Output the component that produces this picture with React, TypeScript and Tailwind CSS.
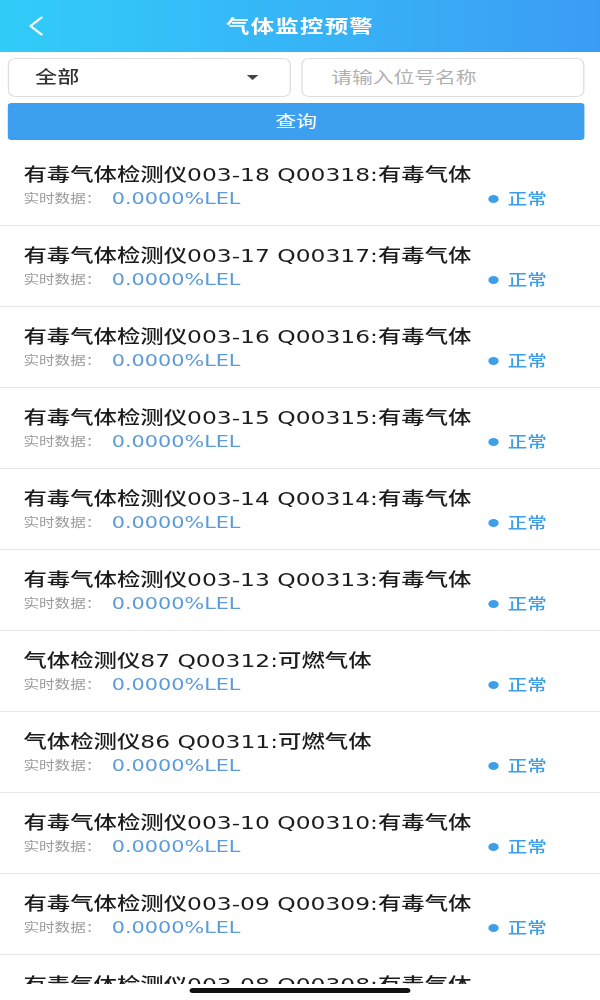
import React from "react"

type Device = {
  name: string
  value: string
  status: string
}

const devices: Device[] = [
  { name: "有毒气体检测仪003-18 Q00318:有毒气体", value: "0.0000%LEL", status: "正常" },
  { name: "有毒气体检测仪003-17 Q00317:有毒气体", value: "0.0000%LEL", status: "正常" },
  { name: "有毒气体检测仪003-16 Q00316:有毒气体", value: "0.0000%LEL", status: "正常" },
  { name: "有毒气体检测仪003-15 Q00315:有毒气体", value: "0.0000%LEL", status: "正常" },
  { name: "有毒气体检测仪003-14 Q00314:有毒气体", value: "0.0000%LEL", status: "正常" },
  { name: "有毒气体检测仪003-13 Q00313:有毒气体", value: "0.0000%LEL", status: "正常" },
  { name: "气体检测仪87 Q00312:可燃气体", value: "0.0000%LEL", status: "正常" },
  { name: "气体检测仪86 Q00311:可燃气体", value: "0.0000%LEL", status: "正常" },
  { name: "有毒气体检测仪003-10 Q00310:有毒气体", value: "0.0000%LEL", status: "正常" },
  { name: "有毒气体检测仪003-09 Q00309:有毒气体", value: "0.0000%LEL", status: "正常" },
  { name: "有毒气体检测仪003-08 Q00308:有毒气体", value: "0.0000%LEL", status: "正常" },
]

export default function App() {
  return (
    // the screenshot is stretched sideways, so the phone layout is drawn at 462px and widened
    <div className="w-[600px] h-[1000px] overflow-hidden bg-white font-['DejaVu_Sans','Noto_Sans_CJK_SC',sans-serif]">
      <div className="w-[462px] h-[1000px] origin-top-left scale-x-[1.2987] flex flex-col">

        {/* Header */}
        <div className="h-[52px] shrink-0 flex items-center bg-linear-to-r from-[#31ccf8] to-[#3b9cf4]">
          <div className="pl-[21px] flex items-center">
            <svg width="13" height="20" viewBox="0 0 13 20" fill="none">
              <path d="M11 1.5 L2.5 10 L11 18.5" stroke="white" strokeWidth="1.8" strokeLinecap="round" strokeLinejoin="round" />
            </svg>
          </div>
          <h1 className="flex-1 text-center pr-[34px] text-white text-[18px] font-bold tracking-[1px]">
            气体监控预警
          </h1>
        </div>

        {/* Filters */}
        <div className="shrink-0 pl-[6px] pt-[6px] pb-[5px] flex flex-col gap-[6px]">
          <div className="flex gap-[8px]">
            <div className="w-[218px] h-[39px] flex items-center justify-between pl-[20px] pr-[24px] border border-[#dedede] rounded-[6px] bg-white">
              <span className="text-[17px] font-medium text-[#333]">全部</span>
              <svg width="9" height="5" viewBox="0 0 9 5">
                <path d="M0 0 H9 L4.5 5 Z" fill="#444" />
              </svg>
            </div>
            <div className="w-[218px] h-[39px] flex items-center pl-[22px] border border-[#dedede] rounded-[6px] bg-white">
              <span className="text-[16px] text-[#b0b0b0]">请输入位号名称</span>
            </div>
          </div>
          <button className="h-[37px] w-[444px] rounded-[3px] bg-[#3c9ff0] text-white text-[16px]">
            查询
          </button>
        </div>

        {/* List */}
        <div className="flex-1 overflow-hidden">
          {devices.map((d) => (
            <div key={d.name} className="h-[81px] border-b border-[#e6e6e6] pl-[18px] pr-[41px] pt-[19px]">
              <p className="text-[18px] leading-[22px] font-medium text-[#1c1c1c] whitespace-nowrap">{d.name}</p>
              <div className="mt-[3px] h-[20px] flex items-center">
                <span className="text-[12px] text-[#9a9a9a]">实时数据：</span>
                <span className="ml-[8px] text-[16px] text-[#5b9bd8]">{d.value}</span>
                <div className="ml-auto flex items-center gap-[7px]">
                  <span className="w-[8px] h-[8px] rounded-full bg-[#3d9fe9]" />
                  <span className="text-[15px] font-medium text-[#3d9fe6]">{d.status}</span>
                </div>
              </div>
            </div>
          ))}
        </div>

        {/* Home indicator */}
        <div className="h-[16px] shrink-0 flex justify-center bg-white">
          <div className="mt-[4px] w-[170px] h-[5px] rounded-full bg-[#111]" />
        </div>
      </div>
    </div>
  )
}
